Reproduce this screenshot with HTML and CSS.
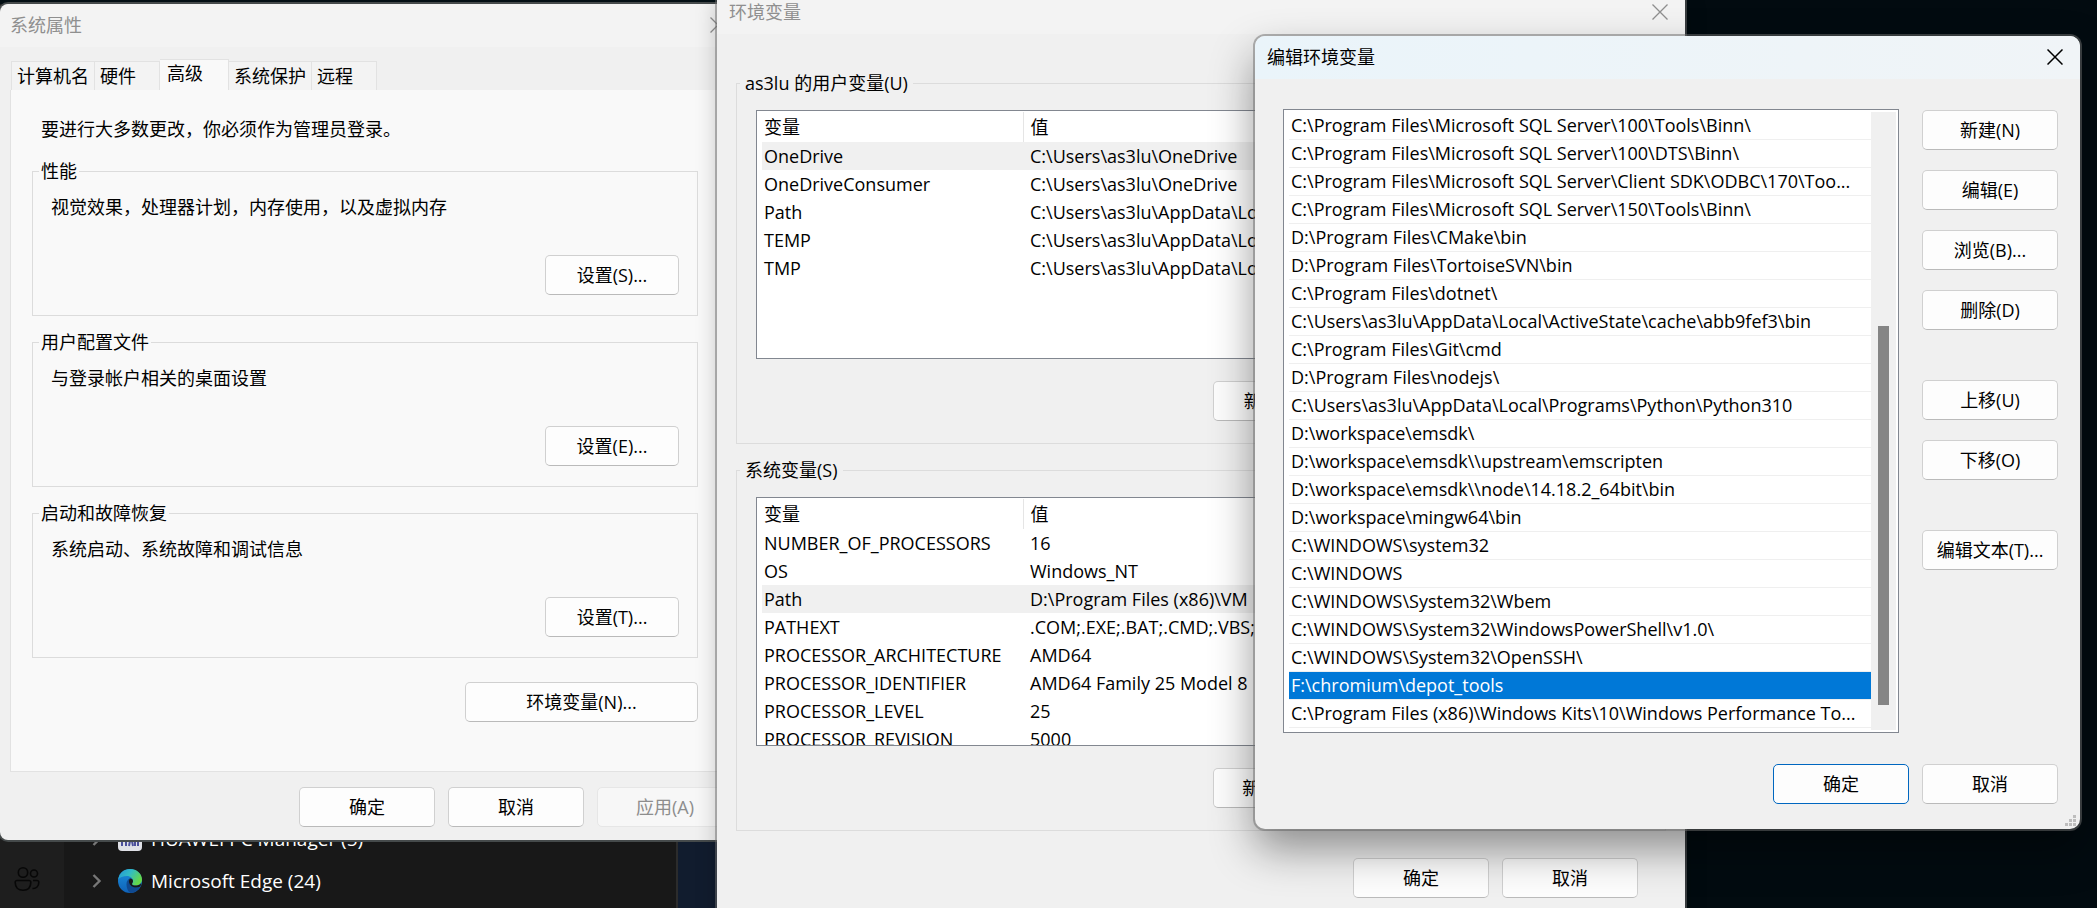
FILE: index.html
```html
<!DOCTYPE html>
<html lang="zh-CN">
<head>
<meta charset="utf-8">
<title>编辑环境变量</title>
<link rel="stylesheet" href="styles.css">
</head>
<body>
<div class="desktop">

  <div class="taskmgr">
    <nav class="rail">
      <svg class="users" viewBox="0 0 26 26"><g fill="none" stroke="#070707" stroke-width="1.6"><circle cx="9" cy="6.500" r="4.700"/><circle cx="20" cy="7.500" r="3.500"/><path d="M3 14.500h12a1.800 1.800 0 0 1 1.800 1.800c0 5-3 8-7.800 8s-7.800-3-7.800-8A1.800 1.800 0 0 1 3 14.500zM19 14.500h4a1.800 1.800 0 0 1 1.800 1.800c0 4-2.500 6.500-6.300 6.200"/></g></svg>
    </nav>
    <ul class="procs">
      <li class="proc">
        <svg class="chev" viewBox="0 0 10 14"><path d="M1.500 1l6 6-6 6" fill="none" stroke="#777" stroke-width="2.400"/></svg>
        <svg class="app" viewBox="0 0 24 24"><rect width="24" height="24" rx="4" fill="#dfe0e6"/><path d="M4 19V8M8 19V8M4 13h4M11 19l2-10 2 10M20 19V8M17 8v11" stroke="#4b4f9b" stroke-width="2" fill="none"/></svg>
        <span>HUAWEI PC Manager (5)</span>
      </li>
      <li class="proc">
        <svg class="chev" viewBox="0 0 10 14"><path d="M1.500 1l6 6-6 6" fill="none" stroke="#777" stroke-width="2.400"/></svg>
        <svg class="app" viewBox="0 0 24 24">
          <defs>
            <linearGradient id="edge-top" x1="0" y1="0" x2="1" y2="0.500"><stop offset="0" stop-color="#2394d8"/><stop offset="0.500" stop-color="#32bcc4"/><stop offset="1" stop-color="#65d847"/></linearGradient>
            <linearGradient id="edge-low" x1="0" y1="0" x2="0" y2="1"><stop offset="0" stop-color="#1b8fdc"/><stop offset="1" stop-color="#0f62b8"/></linearGradient>
          </defs>
          <circle cx="12" cy="12" r="12" fill="url(#edge-low)"/>
          <path d="M0.200 10.500C1.200 4 6 0 12 0c7 0 12 5 12 10.500 0 3.600-2.800 6-6 6-2.400 0-4-.8-4-1.600 0-.7 1-1.200 1-3 0-2.600-2.600-5-6-5-4 0-7.500 1.300-8.800 3.600z" fill="url(#edge-top)"/>
          <path d="M8.500 15c0-3 1.500-5 3.300-5.600-1.500 2-.8 6 1.800 7.800 2.800 1.900 6.700 1.500 8.600.4C20.300 21.500 16.500 24 12.500 24 9.800 22.500 8.500 18.500 8.500 15z" fill="#104a91"/>
          <path d="M15 12c0 1.600-1 2.200-1 2.900 0 1 2 1.800 4.500 1.600 2-.2 3.500-1 4.500-2.300.3.800-.3 2.800-.9 3.400-1.900 1.100-5.800 1.500-8.600-.4-2.600-1.800-3.300-5.300-1.700-7.600 1.800-.4 3.200.9 3.200 2.400z" fill="#181818"/>
        </svg>
        <span>Microsoft Edge (24)</span>
      </li>
    </ul>
    <div class="behind"></div>
  </div>

  <section class="window props" aria-label="系统属性">
    <header class="titlebar muted">
      <h1>系统属性</h1>
      <button class="close" aria-label="关闭"><svg viewBox="0 0 16 16"><path d="M0.500 0.500l15 15M15.500 0.500l-15 15" stroke="currentColor" stroke-width="1.300"/></svg></button>
    </header>
    <div class="tabs" role="tablist">
      <button class="tab" role="tab">计算机名</button>
      <button class="tab" role="tab">硬件</button>
      <button class="tab active" role="tab" aria-selected="true">高级</button>
      <button class="tab" role="tab">系统保护</button>
      <button class="tab" role="tab">远程</button>
    </div>
    <div class="sheet">
      <p class="note">要进行大多数更改，你必须作为管理员登录。</p>
      <fieldset class="group">
        <legend>性能</legend>
        <p>视觉效果，处理器计划，内存使用，以及虚拟内存</p>
        <button class="btn">设置(S)...</button>
      </fieldset>
      <fieldset class="group">
        <legend>用户配置文件</legend>
        <p>与登录帐户相关的桌面设置</p>
        <button class="btn">设置(E)...</button>
      </fieldset>
      <fieldset class="group">
        <legend>启动和故障恢复</legend>
        <p>系统启动、系统故障和调试信息</p>
        <button class="btn">设置(T)...</button>
      </fieldset>
      <button class="btn wide">环境变量(N)...</button>
    </div>
    <footer class="actions">
      <button class="btn">确定</button>
      <button class="btn">取消</button>
      <button class="btn" disabled>应用(A)</button>
    </footer>
  </section>

  <section class="window envs" aria-label="环境变量">
    <header class="titlebar muted">
      <h1>环境变量</h1>
      <button class="close" aria-label="关闭"><svg viewBox="0 0 16 16"><path d="M0.500 0.500l15 15M15.500 0.500l-15 15" stroke="currentColor" stroke-width="1.300"/></svg></button>
    </header>
    <div class="envs-body">
      <fieldset class="vars">
        <legend>as3lu 的用户变量(U)</legend>
        <div class="listbox">
          <table>
            <thead><tr><th>变量</th><th>值</th></tr></thead>
            <tbody>
              <tr class="picked"><td>OneDrive</td><td>C:\Users\as3lu\OneDrive</td></tr>
              <tr><td>OneDriveConsumer</td><td>C:\Users\as3lu\OneDrive</td></tr>
              <tr><td>Path</td><td>C:\Users\as3lu\AppData\Lo</td></tr>
              <tr><td>TEMP</td><td>C:\Users\as3lu\AppData\Lo</td></tr>
              <tr><td>TMP</td><td>C:\Users\as3lu\AppData\Lo</td></tr>
            </tbody>
          </table>
        </div>
        <button class="btn">新建(N)...</button>
      </fieldset>
      <fieldset class="vars">
        <legend>系统变量(S)</legend>
        <div class="listbox">
          <table>
            <thead><tr><th>变量</th><th>值</th></tr></thead>
            <tbody>
              <tr><td>NUMBER_OF_PROCESSORS</td><td>16</td></tr>
              <tr><td>OS</td><td>Windows_NT</td></tr>
              <tr class="picked"><td>Path</td><td>D:\Program Files (x86)\VM</td></tr>
              <tr><td>PATHEXT</td><td>.COM;.EXE;.BAT;.CMD;.VBS;</td></tr>
              <tr><td>PROCESSOR_ARCHITECTURE</td><td>AMD64</td></tr>
              <tr><td>PROCESSOR_IDENTIFIER</td><td>AMD64 Family 25 Model 8</td></tr>
              <tr><td>PROCESSOR_LEVEL</td><td>25</td></tr>
              <tr><td>PROCESSOR_REVISION</td><td>5000</td></tr>
            </tbody>
          </table>
        </div>
        <button class="btn">新建(W)...</button>
      </fieldset>
    </div>
    <footer class="actions">
      <button class="btn">确定</button>
      <button class="btn">取消</button>
    </footer>
  </section>

  <section class="window edit" aria-label="编辑环境变量">
    <header class="titlebar">
      <h1>编辑环境变量</h1>
      <button class="close" aria-label="关闭"><svg viewBox="0 0 16 16"><path d="M0.500 0.500l15 15M15.500 0.500l-15 15" stroke="currentColor" stroke-width="1.500"/></svg></button>
    </header>
    <div class="edit-body">
      <div class="paths">
        <ul>
          <li>C:\Program Files\Microsoft SQL Server\100\Tools\Binn\</li>
          <li>C:\Program Files\Microsoft SQL Server\100\DTS\Binn\</li>
          <li>C:\Program Files\Microsoft SQL Server\Client SDK\ODBC\170\Too...</li>
          <li>C:\Program Files\Microsoft SQL Server\150\Tools\Binn\</li>
          <li>D:\Program Files\CMake\bin</li>
          <li>D:\Program Files\TortoiseSVN\bin</li>
          <li>C:\Program Files\dotnet\</li>
          <li>C:\Users\as3lu\AppData\Local\ActiveState\cache\abb9fef3\bin</li>
          <li>C:\Program Files\Git\cmd</li>
          <li>D:\Program Files\nodejs\</li>
          <li>C:\Users\as3lu\AppData\Local\Programs\Python\Python310</li>
          <li>D:\workspace\emsdk\</li>
          <li>D:\workspace\emsdk\\upstream\emscripten</li>
          <li>D:\workspace\emsdk\\node\14.18.2_64bit\bin</li>
          <li>D:\workspace\mingw64\bin</li>
          <li>C:\WINDOWS\system32</li>
          <li>C:\WINDOWS</li>
          <li>C:\WINDOWS\System32\Wbem</li>
          <li>C:\WINDOWS\System32\WindowsPowerShell\v1.0\</li>
          <li>C:\WINDOWS\System32\OpenSSH\</li>
          <li class="chosen">F:\chromium\depot_tools</li>
          <li>C:\Program Files (x86)\Windows Kits\10\Windows Performance To...</li>
        </ul>
        <div class="scroll"><div class="thumb"></div></div>
      </div>
      <div class="side">
        <button class="btn">新建(N)</button>
        <button class="btn">编辑(E)</button>
        <button class="btn">浏览(B)...</button>
        <button class="btn">删除(D)</button>
        <button class="btn apart">上移(U)</button>
        <button class="btn">下移(O)</button>
        <button class="btn apart">编辑文本(T)...</button>
      </div>
    </div>
    <footer class="actions">
      <button class="btn primary">确定</button>
      <button class="btn">取消</button>
    </footer>
    <svg class="grip" viewBox="0 0 12 12"><path d="M8 0h3v3h-3zM4 4h3v3h-3zM8 4h3v3h-3zM0 8h3v3h-3zM4 8h3v3h-3zM8 8h3v3h-3z" fill="#bdbdbd"/></svg>
  </section>

</div>
</body>
</html>
```

FILE: styles.css
```css
* { box-sizing: border-box; }

body {
  margin: 0;
  background: #020b10;
  color: #000;
  font-family: "Open Sans", "Noto Sans CJK SC", sans-serif;
  font-size: 18px;
  line-height: 24px;
}

h1, p, ul { margin: 0; padding: 0; }
h1 { font-size: 18px; font-weight: 400; }
ul { list-style: none; }

.desktop {
  position: relative;
  height: 100vh;
  overflow: hidden;
}

/* dark task list behind the dialogs */
.taskmgr {
  position: absolute;
  left: 0;
  top: 0;
  width: 720px;
  height: 100%;
  display: flex;
  background: #181818;
  border-top: 4px solid #030f14;
  color: #fff;
  font-size: 19px;
}
.rail {
  width: 64px;
  padding: 0 14px 16px;
  background: #1e1e1e;
  display: flex;
  align-items: flex-end;
}
.users { width: 26px; height: 26px; }
.procs {
  flex: 1;
  display: flex;
  flex-direction: column;
  justify-content: flex-end;
  padding: 0 28px 6px;
}
.proc {
  display: flex;
  align-items: center;
  height: 42px;
}
.chev { width: 10px; height: 14px; margin-right: 16px; }
.app { width: 24px; height: 24px; margin-right: 9px; }
.behind {
  width: 44px;
  background: #111c2e;
  border-left: 2px solid #2c2c2c;
}

/* windows */
.window {
  position: absolute;
  display: flex;
  flex-direction: column;
  background: #f0f0f0;
}
.props {
  left: 0;
  top: 4px;
  width: 746px;
  border-radius: 8px;
  box-shadow: 0 0 0 2px #454a4b;
}
.envs {
  left: 717px;
  top: -9px;
  width: 968px;
  height: 930px;
  border-radius: 8px;
  box-shadow: 0 0 0 2px rgba(110, 110, 110, 0.5), 0 8px 22px rgba(0, 0, 0, 0.22);
}
.edit {
  left: 1255px;
  top: 36px;
  width: 825px;
  border-radius: 10px;
  box-shadow: 0 0 0 2px rgba(110, 110, 110, 0.5), 0 20px 44px rgba(0, 0, 0, 0.42);
}

.titlebar {
  display: flex;
  align-items: center;
  justify-content: space-between;
  height: 43px;
  padding: 0 17px 2px 12px;
  background: linear-gradient(90deg, #eaf4fa, #f0f4f7);
  border-radius: 10px 10px 0 0;
}
.titlebar.muted { background: #f3f3f3; color: #8f8f8f; }
.props .titlebar { padding-left: 10px; padding-right: 20px; }

.close {
  width: 16px;
  height: 16px;
  padding: 0;
  border: 0;
  background: none;
  color: inherit;
}
.close svg { display: block; width: 16px; height: 16px; }

.btn {
  width: 136px;
  height: 40px;
  padding: 0;
  border: 1px solid #d0d0d0;
  border-bottom-color: #bababa;
  border-radius: 5px;
  background: #fdfdfd;
  color: #000;
  font: inherit;
}
.btn:disabled { background: #f7f7f7; border-color: #e6e6e6; color: #8d8d8d; }
.btn.primary { border-color: #0067c0; }

.actions { display: flex; justify-content: flex-end; gap: 13px; }

/* system properties */
.tabs {
  display: flex;
  align-items: flex-end;
  height: 43px;
  padding-left: 11px;
}
.tab {
  height: 29px;
  padding: 0 5px;
  border: 1px solid #e2e2e2;
  border-width: 1px 1px 0 0;
  background: #f3f3f3;
  color: #000;
  font: inherit;
  text-align: left;
}
.tab:first-child { border-left-width: 1px; }
.tab:nth-child(2), .tab:last-child { width: 65px; }
.tab.active { width: 69px; height: 31px; padding: 0 7px 4px; background: #f9f9f9; }

.sheet {
  margin: 0 10px;
  height: 682px;
  padding: 27px 37px 0 21px;
  background: #f9f9f9;
  border: 1px solid #e2e2e2;
  border-top: 0;
  display: flex;
  flex-direction: column;
}
.note { padding-left: 9px; }
.group {
  height: 157px;
  margin: 18px 0 0;
  padding: 12px 18px 0 18px;
  border: 1px solid #dcdcdc;
  display: flex;
  flex-direction: column;
}
.group + .group { margin-top: 14px; }
.group legend { padding: 0 2px; margin-left: -12px; }
.group .btn { width: 134px; margin-top: 36px; align-self: flex-end; }
.btn.wide { width: 233px; margin-top: 24px; align-self: flex-end; }
.props .actions { padding: 15px 13px 13px; }

/* environment variables */
.envs-body { padding: 37px 19px 0; }
.vars {
  height: 373px;
  margin: 0;
  padding: 15px 19px 0;
  border: 1px solid #dcdcdc;
  display: flex;
  flex-direction: column;
}
.vars + .vars { margin-top: 14px; }
.vars legend { padding: 0 5px; margin-left: -16px; }
.listbox {
  height: 249px;
  overflow: hidden;
  background: #fff;
  border: 1px solid #828790;
  padding: 1px 5px;
}
.listbox table {
  width: 100%;
  table-layout: fixed;
  border-collapse: collapse;
}
.listbox th, .listbox td {
  height: 28px;
  padding: 0 0 0 2px;
  text-align: left;
  font-weight: 400;
  white-space: nowrap;
}
.listbox th { height: 30px; }
.listbox th:first-child { width: 261px; border-right: 1px solid #e5e5e5; }
.listbox th + th, .listbox td + td { padding-left: 7px; }
.picked { background: #f0f0f0; }
.vars .btn { margin: 22px 0 0 457px; }
.envs .actions { padding: 27px 47px 0; }

/* path editor */
.edit-body {
  display: flex;
  gap: 23px;
  padding: 30px 22px 0 28px;
}
.paths {
  flex: 1;
  height: 624px;
  display: flex;
  padding: 2px;
  background: #fff;
  border: 1px solid #828790;
}
.paths ul { flex: 1; min-width: 0; }
.paths li {
  height: 28px;
  padding-left: 2px;
  margin-left: 3px;
  border-bottom: 1px solid #efefef;
  line-height: 26px;
  white-space: nowrap;
}
.paths .chosen { background: #0078d7; color: #fff; }
.scroll {
  width: 25px;
  padding: 214px 7px 25px;
  background: #f0f0f0;
}
.thumb { height: 100%; background: #858585; }
.side { display: flex; flex-direction: column; gap: 20px; padding-top: 1px; }
.side .apart { margin-top: 30px; }
.edit .actions { padding: 31px 22px 25px; }
.grip { position: absolute; right: 3px; bottom: 2px; width: 12px; height: 12px; }
```
